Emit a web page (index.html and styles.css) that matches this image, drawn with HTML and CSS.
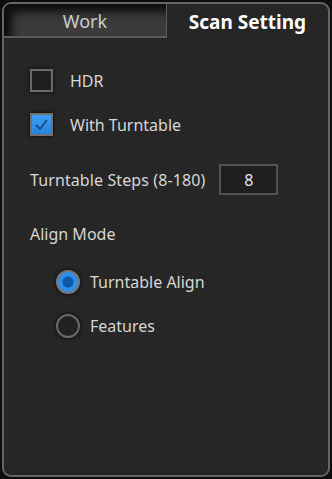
FILE: index.html
```html
<!DOCTYPE html>
<html lang="en">
<head>
    <meta charset="UTF-8">
    <meta name="viewport" content="width=device-width, initial-scale=1.0">
    <title>Scan Setting</title>
    <link rel="stylesheet" href="styles.css">
</head>
<body>
    <div class="panel">
        <div class="tabs">
            <div class="tab">Work</div>
            <div class="tab active">Scan Setting</div>
        </div>

        <div class="content">
            <label class="check-row">
                <span class="checkbox"></span>
                <span>HDR</span>
            </label>

            <label class="check-row">
                <span class="checkbox checked">
                    <svg width="19" height="19" viewBox="0 0 19 19">
                        <path d="M4 10 L8 14 L15 5" fill="none" stroke="#134a85" stroke-width="1.8"/>
                    </svg>
                </span>
                <span>With Turntable</span>
            </label>

            <div class="steps-row">
                <span class="steps-label">Turntable Steps (8-180)</span>
                <div class="steps-input">8</div>
            </div>

            <div class="section-title">Align Mode</div>

            <label class="radio-row first">
                <span class="radio checked"></span>
                <span>Turntable Align</span>
            </label>

            <label class="radio-row">
                <span class="radio"></span>
                <span>Features</span>
            </label>
        </div>
    </div>
</body>
</html>
```

FILE: styles.css
```css
body {
    margin: 0;
    background-color: #0d0d0d;
    font-family: "Noto Sans", "Open Sans", sans-serif;
    color: #d6d6d6;
    font-size: 16px;
}

.panel {
    margin: 2px;
    height: 471px;
    border: 2px solid #646464;
    border-radius: 9px;
    background-color: #262626;
    overflow: hidden;
}

.tabs {
    display: flex;
    height: 34px;
}

.tab {
    flex: 1;
    display: flex;
    align-items: center;
    justify-content: center;
    font-size: 18px;
    padding-top: 2px;
}

.tab:first-child {
    background-color: #3b3b3b;
    box-shadow: inset 8px 8px 10px rgba(0, 0, 0, 0.8);
    border-right: 1px solid #5a5a5a;
    border-bottom: 2px solid #5a5a5a;
    color: #cdcdcd;
    flex: 0 0 162px;
}

.tab.active {
    color: #ffffff;
    font-weight: bold;
    font-size: 19px;
}

.content {
    padding: 31px 0 0 26px;
}

.check-row {
    display: flex;
    align-items: center;
    gap: 17px;
    height: 23px;
    margin-bottom: 21px;
}

.checkbox {
    box-sizing: border-box;
    width: 23px;
    height: 23px;
    border: 2px solid #6a6a6a;
    background-color: #1f1f1f;
    box-shadow: 0 0 4px rgba(0, 0, 0, 0.8);
    display: flex;
    align-items: center;
    justify-content: center;
}

.checkbox.checked {
    border-color: #707070;
    background: linear-gradient(#3ea0f5, #2583dc);
}

.steps-row {
    display: flex;
    align-items: center;
    margin-top: 28px;
    height: 31px;
}

.steps-label {
    letter-spacing: 0.1px;
}

.steps-input {
    box-sizing: border-box;
    margin-left: 14px;
    width: 59px;
    height: 31px;
    border: 2px solid #525252;
    background-color: #1f1f1f;
    display: flex;
    align-items: center;
    justify-content: center;
    color: #e6e6e6;
}

.section-title {
    margin-top: 29px;
    line-height: 20px;
}

.radio-row {
    display: flex;
    align-items: center;
    gap: 10px;
    height: 24px;
    margin-left: 26px;
    margin-top: 20px;
}

.radio-row.first {
    margin-top: 26px;
}

.radio {
    box-sizing: border-box;
    width: 24px;
    height: 24px;
    border-radius: 50%;
    border: 2px solid #6a6a6a;
    background-color: #222;
    box-shadow: 0 0 4px rgba(0, 0, 0, 0.8);
}

.radio.checked {
    border-color: #777;
    background: radial-gradient(circle, #0c5aa6 0, #0c5aa6 5px, #2e8fe8 6px);
}
```
